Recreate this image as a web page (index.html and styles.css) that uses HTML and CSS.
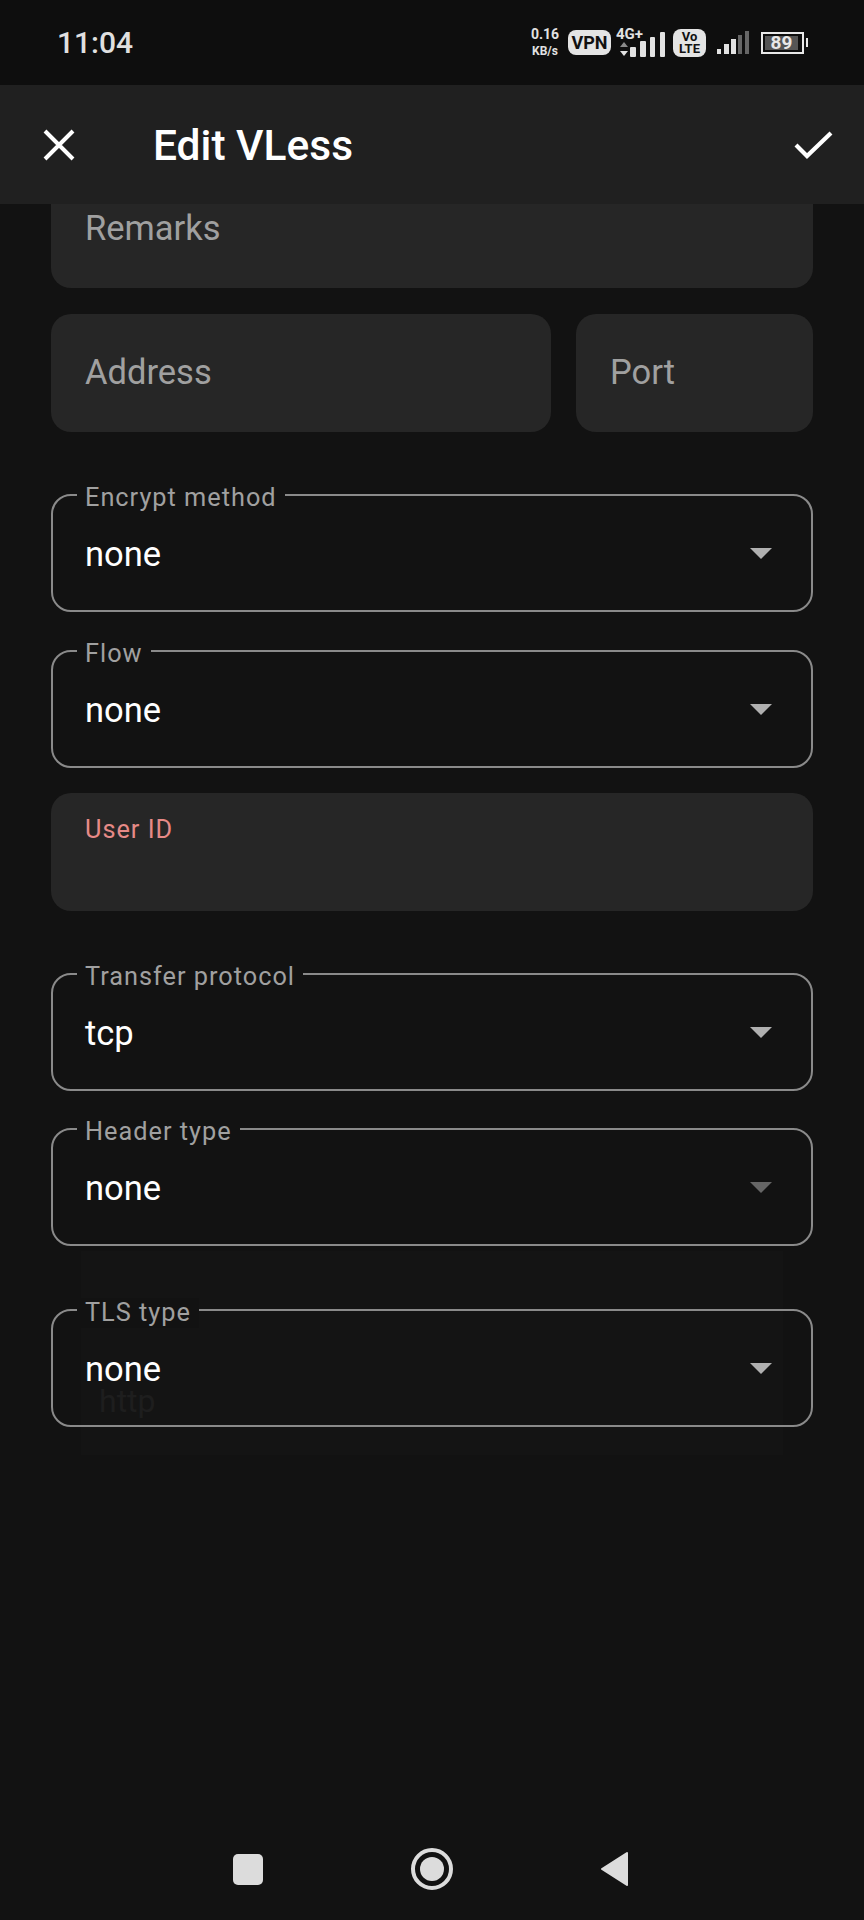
FILE: index.html
```html
<!DOCTYPE html>
<html lang="en">
<head>
  <meta charset="UTF-8" />
  <meta name="viewport" content="width=device-width, initial-scale=1" />
  <title>Edit VLess</title>
  <link rel="stylesheet" href="styles.css">
</head>
<body>
  <div class="page">
    <div class="statusbar">
      <span class="time">11:04</span>
      <div class="status-icons">
        <div class="speed"><span>0.16</span><span class="speed-unit">KB/s</span></div>
        <span class="pill vpn">VPN</span>
        <div class="net">
          <span class="net-label">4G+</span>
          <svg class="net-bars" width="48" height="26" viewBox="0 0 48 26">
            <path d="M4 10l4 5H0z" fill="#8a8a8a"/>
            <path d="M4 24l4-5H0z" fill="#e2e2e2"/>
            <rect x="10" y="15" width="6" height="10" rx="1" fill="#e2e2e2"/>
            <rect x="20" y="9" width="6" height="16" rx="1" fill="#e2e2e2"/>
            <rect x="30" y="5" width="5" height="20" rx="1" fill="#e2e2e2"/>
            <rect x="40" y="0" width="5" height="25" rx="1" fill="#e2e2e2"/>
          </svg>
        </div>
        <span class="pill volte">Vo<br>LTE</span>
        <svg class="signal" width="32" height="24" viewBox="0 0 32 24">
          <rect x="0" y="18" width="4" height="5" fill="#e2e2e2"/>
          <rect x="7" y="13" width="5" height="10" fill="#e2e2e2"/>
          <rect x="14" y="8" width="5" height="15" fill="#e2e2e2"/>
          <rect x="21" y="4" width="4" height="19" fill="#666"/>
          <rect x="28" y="0" width="4" height="23" fill="#666"/>
        </svg>
        <div class="battery">
          <div class="battery-body"><span class="battery-level">89</span></div>
          <span class="battery-nub"></span>
        </div>
      </div>
    </div>

    <header class="appbar">
      <svg class="appbar-icon" width="32" height="32" viewBox="0 0 32 32">
        <path d="M2 2l28 28M30 2L2 30" stroke="#fff" stroke-width="4" fill="none"/>
      </svg>
      <h1>Edit VLess</h1>
      <svg class="appbar-icon check" width="40" height="30" viewBox="0 0 40 30">
        <path d="M3 15l11 11L38 3" stroke="#fff" stroke-width="4.2" fill="none"/>
      </svg>
    </header>

    <main class="form">
      <div class="filled remarks"><span class="placeholder">Remarks</span></div>
      <div class="row">
        <div class="filled grow"><span class="placeholder">Address</span></div>
        <div class="filled port"><span class="placeholder">Port</span></div>
      </div>

      <div class="outlined first">
        <span class="legend">Encrypt method</span>
        <span class="value">none</span>
        <span class="arrow"></span>
      </div>
      <div class="outlined">
        <span class="legend">Flow</span>
        <span class="value">none</span>
        <span class="arrow"></span>
      </div>
      <div class="filled user-id"><span class="error-label">User ID</span></div>

      <div class="outlined spaced">
        <span class="legend">Transfer protocol</span>
        <span class="value">tcp</span>
        <span class="arrow"></span>
      </div>
      <div class="outlined header-type">
        <span class="legend">Header type</span>
        <span class="value">none</span>
        <span class="arrow dim"></span>
      </div>
      <div class="outlined tls">
        <span class="legend">TLS type</span>
        <span class="value">none</span>
        <span class="arrow"></span>
        <span class="ghost-option">http</span>
      </div>
    </main>

    <nav class="navbar">
      <span class="nav-square"></span>
      <span class="nav-home"><span class="nav-dot"></span></span>
      <svg width="30" height="36" viewBox="0 0 30 36">
        <path d="M27 2L2 18l25 16z" fill="#dcdcdc" stroke="#dcdcdc" stroke-width="2" stroke-linejoin="round"/>
      </svg>
    </nav>
  </div>
</body>
</html>
```

FILE: styles.css
```css
* {
  box-sizing: border-box;
}

body {
  margin: 0;
  background-color: #121212;
  color: #fff;
  font-family: Roboto, "Liberation Sans", sans-serif;
}

.page {
  display: flex;
  flex-direction: column;
  height: 1920px;
  overflow: hidden;
}

/* status bar */
.statusbar {
  display: flex;
  align-items: center;
  justify-content: space-between;
  height: 85px;
  padding: 0 56px 0 57px;
  background-color: #0e0e0e;
}

.time {
  font-size: 30px;
  font-weight: 500;
  color: #e0e0e0;
}

.status-icons {
  display: flex;
  align-items: center;
}

.speed {
  display: flex;
  flex-direction: column;
  align-items: center;
  width: 32px;
  font-size: 14px;
  line-height: 17px;
  font-weight: 700;
  color: #e2e2e2;
}

.speed-unit {
  font-size: 12px;
}

.pill {
  display: block;
  background-color: #e4e4e4;
  color: #111;
  font-weight: 700;
  text-align: center;
}

.vpn {
  width: 43px;
  height: 25px;
  margin-left: 7px;
  border-radius: 8px;
  font-size: 18px;
  line-height: 25px;
}

.net {
  display: flex;
  flex-direction: column;
  width: 48px;
  margin-left: 5px;
}

.net-label {
  font-size: 15px;
  line-height: 13px;
  font-weight: 700;
  color: #e2e2e2;
}

.net-bars {
  margin-top: -9px;
  margin-left: 4px;
}

.volte {
  width: 33px;
  height: 28px;
  margin-left: 9px;
  border-radius: 8px;
  font-size: 13px;
  line-height: 12px;
  padding-top: 2px;
}

.signal {
  margin-left: 11px;
}

.battery {
  display: flex;
  align-items: center;
  margin-left: 12px;
}

.battery-body {
  width: 43px;
  height: 22px;
  padding: 2px;
  border: 2px solid #e8e8e8;
}

.battery-level {
  display: block;
  width: 33px;
  height: 14px;
  background-color: #555;
  color: #e8e8e8;
  font-size: 19px;
  font-weight: 700;
  line-height: 14px;
  text-align: center;
}

.battery-nub {
  width: 2px;
  height: 9px;
  margin-left: 2px;
  background-color: #e8e8e8;
}

/* app bar */
.appbar {
  display: flex;
  align-items: center;
  height: 119px;
  padding: 0 31px 0 43px;
  background-color: #202020;
}

.appbar h1 {
  flex: 1;
  margin: 2px 0 0 78px;
  font-size: 42.5px;
  font-weight: 500;
}

/* form */
.form {
  display: flex;
  flex-direction: column;
  padding: 0 51px;
}

.row {
  display: flex;
  gap: 25px;
  margin-top: 26px;
}

.grow {
  flex: 1;
}

.port {
  width: 237px;
}

.filled {
  display: flex;
  align-items: center;
  height: 118px;
  padding: 0 34px;
  background-color: #262626;
  border-radius: 20px;
}

.remarks {
  align-items: flex-start;
  height: 84px;
  padding-top: 4px;
  border-radius: 0 0 20px 20px;
}

.placeholder {
  font-size: 34.5px;
  line-height: 40px;
  color: #a0a0a0;
}

.row .placeholder {
  margin-bottom: 2px;
}

.user-id {
  align-items: flex-start;
  margin-top: 25px;
  padding-top: 22px;
}

.error-label {
  font-size: 25.3px;
  line-height: 30px;
  letter-spacing: 1px;
  color: #e68a87;
}

.outlined {
  position: relative;
  display: flex;
  align-items: center;
  justify-content: space-between;
  height: 118px;
  margin-top: 38px;
  padding: 0 39px 0 32px;
  border: 2px solid #8a8a8a;
  border-radius: 20px;
}

.first {
  margin-top: 62px;
}

.spaced {
  margin-top: 62px;
}

.header-type {
  margin-top: 37px;
}

.tls {
  margin-top: 63px;
}

/* faint dropdown fading out behind the last field */
.tls::before {
  content: "";
  position: absolute;
  z-index: -1;
  left: 28px;
  right: 28px;
  top: -60px;
  bottom: -30px;
  background-color: #141414;
}

.legend {
  position: absolute;
  left: 24px;
  top: -13px;
  padding: 0 8px;
  background-color: #121212;
  font-size: 25.3px;
  line-height: 30px;
  letter-spacing: 1px;
  color: #a0a0a0;
}

.value {
  padding-top: 1px;
  font-size: 34.5px;
  line-height: 36px;
}

.arrow {
  width: 0;
  height: 0;
  border-left: 11px solid transparent;
  border-right: 11px solid transparent;
  border-top: 11px solid #b0b0b0;
}

.arrow.dim {
  border-top-color: #666;
}

.ghost-option {
  position: absolute;
  left: 46px;
  top: 76px;
  font-size: 32px;
  line-height: 28px;
  color: #1e1e1e;
}

/* nav bar */
.navbar {
  display: flex;
  align-items: center;
  height: 70px;
  margin-top: auto;
  margin-bottom: 16px;
  padding-left: 233px;
}

.nav-square {
  width: 30px;
  height: 31px;
  border-radius: 5px;
  background-color: #dcdcdc;
}

.nav-home {
  display: flex;
  align-items: center;
  justify-content: center;
  width: 42px;
  height: 42px;
  margin: 0 147px 0 148px;
  border: 4px solid #dcdcdc;
  border-radius: 50%;
}

.nav-dot {
  width: 24px;
  height: 24px;
  border-radius: 50%;
  background-color: #dcdcdc;
}
```
